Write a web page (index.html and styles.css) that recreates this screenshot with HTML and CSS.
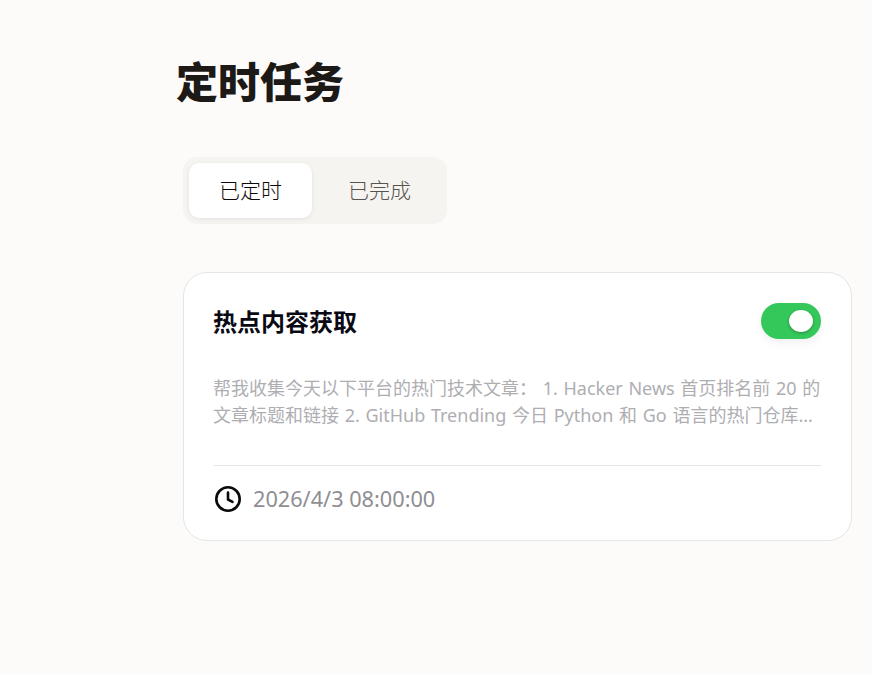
FILE: index.html
```html
<!DOCTYPE html>
<html lang="zh-CN">
<head>
  <meta charset="UTF-8">
  <title>定时任务</title>
  <link rel="stylesheet" href="styles.css">
</head>
<body>
  <main class="page">
    <h1 class="page-title">定时任务</h1>
    <div class="section">
      <div class="tabs">
        <button class="tab tab-active" type="button">已定时</button>
        <button class="tab" type="button">已完成</button>
      </div>
      <div class="card">
        <div class="card-head">
          <h2 class="card-title">热点内容获取</h2>
          <span class="toggle"><span class="toggle-knob"></span></span>
        </div>
        <p class="card-desc">帮我收集今天以下平台的热门技术文章： 1. Hacker News 首页排名前 20 的文章标题和链接 2. GitHub Trending 今日 Python 和 Go 语言的热门仓库...</p>
        <div class="card-foot">
          <svg class="clock" viewBox="0 0 28 28" width="28" height="28" fill="none" stroke="#0a0a0a" stroke-width="2.6" stroke-linecap="round" stroke-linejoin="round">
            <circle cx="14" cy="14" r="11.7"></circle>
            <path d="M14 7.5V14.5L18.5 16.8"></path>
          </svg>
          <span class="card-time">2026/4/3 08:00:00</span>
        </div>
      </div>
    </div>
  </main>
</body>
</html>
```

FILE: styles.css
```css
html, body {
  margin: 0;
  padding: 0;
}
body {
  background: #fcfbf9;
  font-family: "Noto Sans", "Noto Sans CJK SC", sans-serif;
  color: #1c1917;
  overflow: hidden;
  height: 675px;
}
.page {
  padding: 55px 20px 0 176px;
}
.page-title {
  margin: 0;
  font-size: 42px;
  line-height: 54px;
  font-weight: 900;
}
.section {
  margin: 48px 0 0 7px;
}
.tabs {
  display: inline-flex;
  gap: 6px;
  padding: 6px;
  background: #f5f4f1;
  border-radius: 14px;
}
.tab {
  width: 123px;
  height: 55px;
  padding: 0 0 4px;
  border: none;
  border-radius: 10px;
  background: transparent;
  color: #57534e;
  font-family: inherit;
  font-size: 21px;
  font-weight: 300;
}
.tab-active {
  background: #fff;
  color: #0c0a09;
  box-shadow: 0 1px 4px rgba(0, 0, 0, 0.08);
}
.card {
  box-sizing: border-box;
  width: 669px;
  height: 269px;
  margin-top: 48px;
  padding: 30px 30px 0 29px;
  background: #fff;
  border: 1px solid #e5e5e5;
  border-radius: 24px;
}
.card-head {
  display: flex;
  justify-content: space-between;
  align-items: center;
  height: 36px;
}
.card-title {
  margin: 1px 0 0;
  font-size: 24px;
  line-height: 36px;
  font-weight: 700;
  color: #0a0a14;
}
.toggle {
  display: flex;
  align-items: center;
  justify-content: flex-end;
  box-sizing: border-box;
  width: 60px;
  height: 36px;
  padding-right: 8px;
  background: #34c759;
  border-radius: 18px;
  box-shadow: 0 4px 10px rgba(0, 0, 0, 0.06);
}
.toggle-knob {
  width: 24px;
  height: 22px;
  background: #fff;
  border-radius: 50%;
  box-shadow: 0 1px 3px rgba(0, 0, 0, 0.3);
}
.card-desc {
  margin: 36px 0 0;
  font-size: 18px;
  line-height: 27px;
  word-spacing: 1px;
  color: #aeaeb2;
}
.card-foot {
  display: flex;
  align-items: center;
  gap: 11px;
  margin: 36px 0 0 1px;
  padding-top: 19px;
  border-top: 1px solid #e5e5e5;
}
.clock {
  flex: none;
}
.card-time {
  margin-top: -2px;
  font-size: 21.7px;
  color: #8e8e93;
}
```
